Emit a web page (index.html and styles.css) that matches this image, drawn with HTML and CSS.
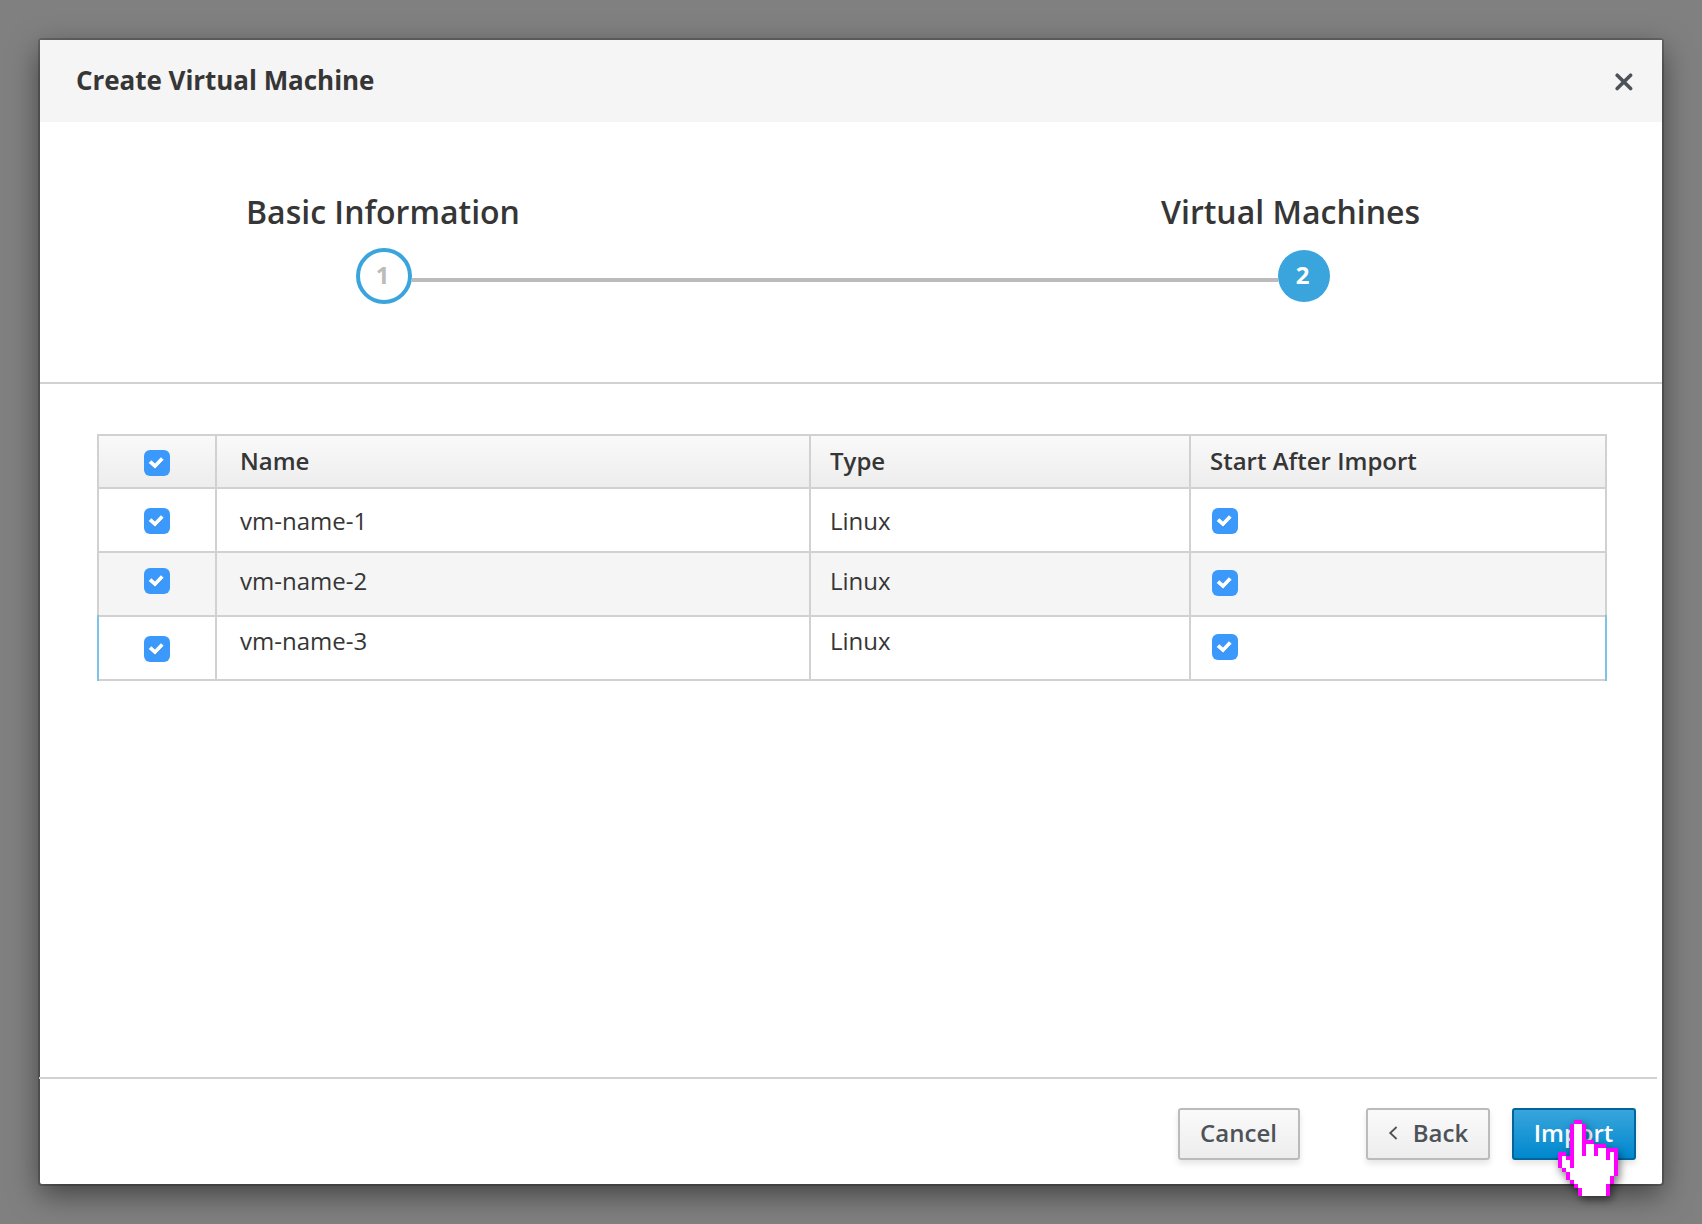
FILE: index.html
```
<!DOCTYPE html>
<html lang="en">
<head>
<meta charset="utf-8">
<title>Create Virtual Machine</title>
<link rel="stylesheet" href="styles.css">
</head>
<body>
<svg class="defs" width="0" height="0" aria-hidden="true">
  <symbol id="check" viewBox="0 0 26 26">
    <path class="tick-shadow" d="M6.3 13l4.9 4.6 7.2-8"/>
    <path class="tick" d="M6 11.6l5 4.6 7.3-7.7"/>
  </symbol>
</svg>
<main class="modal">
  <header class="modal-header">
    <h1 class="title">Create Virtual Machine</h1>
    <button class="close" aria-label="Close">
      <svg width="18" height="18" viewBox="0 0 18 18"><path d="M2.2 2.2l13.4 13.4M15.6 2.2L2.2 15.6"/></svg>
    </button>
  </header>

  <section class="wizard">
    <div class="labels">
      <span class="label">Basic Information</span>
      <span class="label">Virtual Machines</span>
    </div>
    <div class="track">
      <span class="step step-done">1</span>
      <span class="line"></span>
      <span class="step step-current">2</span>
    </div>
  </section>

  <section class="content">
    <div class="table">
      <div class="row head">
        <div class="cell"><svg class="box"><use href="#check"/></svg></div>
        <div class="cell name">Name</div>
        <div class="cell">Type</div>
        <div class="cell">Start After Import</div>
      </div>
      <div class="row first">
        <div class="cell"><svg class="box"><use href="#check"/></svg></div>
        <div class="cell name">vm-name-1</div>
        <div class="cell">Linux</div>
        <div class="cell start"><svg class="box"><use href="#check"/></svg></div>
      </div>
      <div class="row second">
        <div class="cell"><svg class="box"><use href="#check"/></svg></div>
        <div class="cell name">vm-name-2</div>
        <div class="cell">Linux</div>
        <div class="cell start"><svg class="box"><use href="#check"/></svg></div>
      </div>
      <div class="row third">
        <div class="cell"><svg class="box"><use href="#check"/></svg></div>
        <div class="cell name">vm-name-3</div>
        <div class="cell">Linux</div>
        <div class="cell start"><svg class="box"><use href="#check"/></svg></div>
      </div>
    </div>
  </section>

  <footer class="modal-footer">
    <button class="btn cancel">Cancel</button>
    <button class="btn back"><svg class="chevron" width="10" height="14" viewBox="0 0 10 14"><path d="M8.6 1L2.2 7l6.4 6"/></svg>Back</button>
    <button class="btn primary">Import</button>
  </footer>
</main>
<svg class="cursor" width="60" height="76" viewBox="0 0 15 19" shape-rendering="crispEdges">
  <path fill="#fff" d="M4 1h2v5h3v1h3v1h2v6h-1v2h-1v3H6v-2H5v-1H4v-1H3v-2H2v-1H1V9h1v1h1v2h1z"/>
  <path fill="#ff00ff" d="M4 0h2v1h1v4h2v1h3v1h3v7h-1v2h-1v3h-1v-3h1v-2h1V8h-1v2h-1V7h-2v2H9V6H7v3H6V1H4v11H3v-2H2V9H1v3h1v1h1v2h1v1h1v1h1v2H5v-2H4v-1H3v-1H2v-2H1v-1H0V8h2v1h1V1h1z"/>
</svg>
</body>
</html>
```
FILE: styles.css
```
* { box-sizing: border-box; }

body {
  margin: 0;
  height: 1224px;
  padding: 40px;
  background: #808080;
  color: #363636;
  font: 24px/32px "Open Sans", "Noto Sans", sans-serif;
  overflow: hidden;
}

.defs { position: absolute; }

.modal {
  display: flex;
  flex-direction: column;
  width: 1622px;
  height: 1144px;
  background: #fff;
  border-radius: 2px;
  box-shadow: 0 0 0 2px rgba(0, 0, 0, .2), 0 10px 30px rgba(0, 0, 0, .5);
}

.modal-header {
  display: flex;
  justify-content: space-between;
  align-items: center;
  height: 82px;
  padding: 0 29px 0 36px;
  background: #f5f5f5;
}

.title { margin: 0; padding-bottom: 2px; font-size: 26px; font-weight: 700; letter-spacing: -.04px; }

.close { display: flex; padding: 0; margin-top: 1px; border: 0; background: none; }
.close path { fill: none; stroke: #4d5258; stroke-width: 3.6; stroke-linecap: round; }

.wizard { height: 262px; padding-top: 69px; border-bottom: 2px solid #d1d1d1; }
.labels { display: flex; justify-content: space-between; padding: 0 242px 0 206px; }
.label { font-size: 32px; line-height: 42px; font-weight: 600; }

.track { display: flex; align-items: center; height: 56px; margin-top: 15px; padding: 0 332px 0 316px; }
.step {
  display: flex;
  align-items: center;
  justify-content: center;
  border-radius: 50%;
  font-weight: 700;
  padding: 0 3px 2px 0;
}
.step-done { width: 56px; height: 56px; border: 4px solid #39a5dc; color: #bbb; }
.step-current { width: 52px; height: 52px; background: #39a5dc; color: #fff; }
.line { flex: 1; height: 4px; margin-top: 8px; background: #bbb; }

.content { flex: 1; padding: 50px 55px 0 57px; }

.row {
  display: grid;
  grid-template-columns: 118px 594px 380px 1fr;
  height: 64px;
  border: solid #d1d1d1;
  border-width: 0 2px;
}
.cell { border-top: 2px solid #d1d1d1; border-right: 2px solid #d1d1d1; padding-left: 19px; }
.cell:last-child { border-right: 0; }
.cell:first-child { padding-left: 45px; }
.name { padding-left: 23px; }
.start { padding-left: 21px; }

.box { display: block; width: 26px; height: 26px; border-radius: 6px; background: #3b99fc; }
.tick { fill: none; stroke: #fff; stroke-width: 3.8; }
.tick-shadow { fill: none; stroke: #2b6fc0; stroke-opacity: .6; stroke-width: 3; }

.head { height: 53px; font-weight: 600; background: linear-gradient(#fafafa, #ededed); }
.head .cell { padding-top: 9px; }
.head .box { margin-top: 5px; }
.first .cell { padding-top: 16px; }
.first .box { margin-top: 3px; }
.second { background: #f5f5f5; }
.second .cell { padding-top: 12px; }
.second .box { margin-top: 3px; }
.second .start .box { margin-top: 5px; }
.third { height: 66px; border-color: #7dc3e8; }
.third .cell { padding-top: 8px; border-bottom: 2px solid #d1d1d1; }
.third .box { margin-top: 11px; }
.third .start .box { margin-top: 9px; }

.modal-footer {
  display: flex;
  justify-content: flex-end;
  height: 107px;
  margin: 0 5px 0 -1px;
  padding: 29px 21px 0 0;
  border-top: 2px solid #d1d1d1;
}

.btn {
  display: flex;
  align-items: center;
  justify-content: center;
  width: 124px;
  height: 52px;
  margin: 0 0 0 22px;
  padding: 0 1px 2px 0;
  border: 2px solid #bbb;
  border-radius: 3px;
  background: linear-gradient(#fafafa, #ededed);
  box-shadow: 0 4px 6px rgba(3, 3, 3, .1);
  color: #4d5258;
  font: 600 24px/32px "Open Sans", "Noto Sans", sans-serif;
}
.cancel { width: 122px; margin-right: 44px; }
.chevron { margin: 0 15px 0 1px; }
.chevron path { fill: none; stroke: #4d5258; stroke-width: 1.8; }
.primary { border-color: #00659c; background: linear-gradient(#39a5dc, #0088ce); color: #fff; }

.cursor {
  position: absolute;
  left: 1558px;
  top: 1120px;
  filter: drop-shadow(2px 4px 4px rgba(0, 0, 0, .5));
}
```
